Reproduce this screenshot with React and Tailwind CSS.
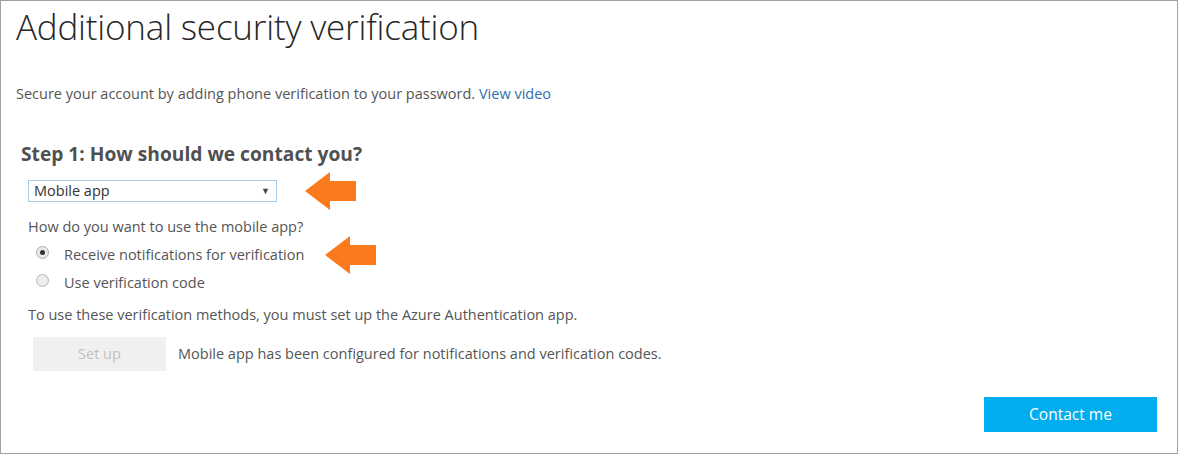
export default function App() {
  const font = { fontFamily: '"Open Sans", "Noto Sans", sans-serif' };
  const Arrow = () => (
    <svg width="51" height="38" viewBox="0 0 51 38" className="block">
      <path d="M0 19 L25 0 L25 9 L51 9 L51 29 L25 29 L25 38 Z" fill="#fb7a1c" />
    </svg>
  );
  return (
    <div className="w-[1178px] h-[454px] border border-[#a0a0a0] bg-white text-[#505050]" style={font}>
      <div className="pl-[15px] pt-[4px]">
        <h1 className="text-[35px] leading-[44px] font-light text-[#262626] tracking-[-0.2px]">Additional security verification</h1>
        <p className="mt-[35px] text-[14.5px] leading-[20px] text-[#555]">
          Secure your account by adding phone verification to your password. <span className="text-[#2f6fb0]">View video</span>
        </p>
      </div>
      <div className="pl-[20px] pt-[37px]">
        <h2 className="text-[19.2px] leading-[26px] font-bold text-[#505050]">Step 1: How should we contact you?</h2>
        <div className="pl-[7px] pt-[13px]">
          <div className="flex items-center gap-[28px] h-[22px]">
            <div className="w-[249px] h-[22px] border border-[#a8cce6] flex items-center justify-between pl-[5px] pr-[6px] text-[14.5px] text-[#333]">
              <span>Mobile app</span>
              <span className="text-[9px] text-[#444]">▼</span>
            </div>
            <Arrow />
          </div>
          <p className="mt-[15px] text-[14.5px] leading-[20px] text-[#555]">How do you want to use the mobile app?</p>
          <div className="flex items-start mt-[6px] h-[24px]">
            <div className="mt-[3px] ml-[8px] w-[13px] h-[13px] rounded-full border border-[#b0b0b0] bg-[#e9e9e9] flex items-center justify-center">
              <div className="w-[5px] h-[5px] rounded-full bg-[#333]" />
            </div>
            <span className="ml-[15px] text-[14.5px] leading-[24px] text-[#555]">Receive notifications for verification</span>
            <div className="ml-[21px] self-center"><Arrow /></div>
          </div>
          <div className="flex items-start mt-[4px] h-[24px]">
            <div className="mt-[3px] ml-[8px] w-[13px] h-[13px] rounded-full border border-[#b8b8b8] bg-[#ececec]" />
            <span className="ml-[15px] text-[14.5px] leading-[24px] text-[#555]">Use verification code</span>
          </div>
          <p className="mt-[10px] text-[14.5px] leading-[20px] text-[#555]">To use these verification methods, you must set up the Azure Authentication app.</p>
          <div className="flex items-center mt-[12px] pl-[5px]">
            <div className="w-[133px] h-[34px] bg-[#f0f0f0] flex items-center justify-center text-[14.5px] text-[#c0c0c0]">Set up</div>
            <span className="ml-[12px] text-[14.5px] text-[#555]">Mobile app has been configured for notifications and verification codes.</span>
          </div>
        </div>
      </div>
      <div className="flex justify-end pr-[20px] mt-[26px]">
        <div className="w-[173px] h-[35px] bg-[#00adef] text-white text-[15.5px] flex items-center justify-center">Contact me</div>
      </div>
    </div>
  );
}
